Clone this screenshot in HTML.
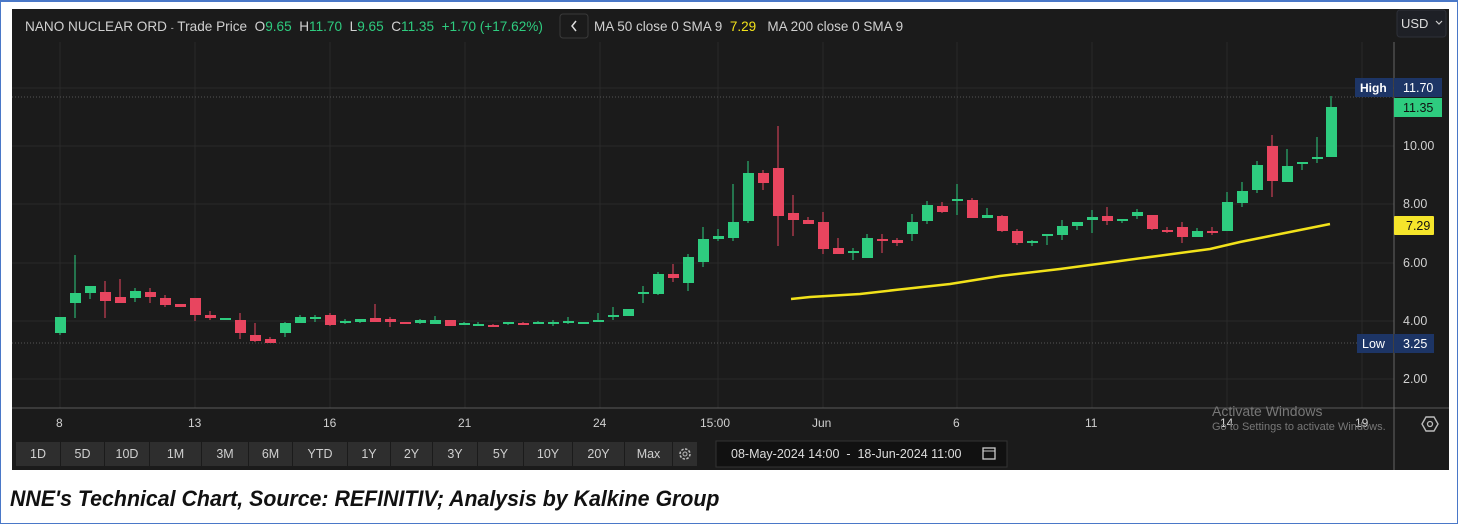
<!DOCTYPE html>
<html><head><meta charset="utf-8"><style>
*{margin:0;padding:0;box-sizing:border-box}
body{width:1458px;height:524px;background:#fff;position:relative;overflow:hidden;font-family:"Liberation Sans",sans-serif}
.frame{position:absolute;left:0;top:0;width:1458px;height:524px;border:1px solid #4a78c8;border-top:2px solid #4a78c8}
.chart{position:absolute;left:12px;top:9px;width:1437px;height:461px;background:#1b1b1b}
.t{position:absolute;font-size:13px;color:#d0d0d0;white-space:nowrap}
.g{color:#2ecc7f}
.btn{position:absolute;top:442px;height:24px;background:#2e2e2e;color:#cfcfcf;font-size:12.5px;text-align:center;line-height:24px}
.cap{position:absolute;left:10px;top:486px;font-size:22px;font-weight:bold;font-style:italic;color:#111;white-space:nowrap;transform:scaleX(0.97);transform-origin:left}
</style></head><body>
<div class="frame"></div>
<div class="chart"></div>
<svg style="position:absolute;left:0;top:0" width="1458" height="524">
<g stroke="#2a2a2a" stroke-width="1">
<line x1="12" y1="88" x2="1394" y2="88"/><line x1="12" y1="146" x2="1394" y2="146"/><line x1="12" y1="204" x2="1394" y2="204"/><line x1="12" y1="263" x2="1394" y2="263"/><line x1="12" y1="321" x2="1394" y2="321"/><line x1="12" y1="379" x2="1394" y2="379"/>
<line x1="60" y1="42" x2="60" y2="408"/><line x1="195" y1="42" x2="195" y2="408"/><line x1="330" y1="42" x2="330" y2="408"/><line x1="465" y1="42" x2="465" y2="408"/><line x1="600" y1="42" x2="600" y2="408"/><line x1="718" y1="42" x2="718" y2="408"/><line x1="823" y1="42" x2="823" y2="408"/><line x1="957" y1="42" x2="957" y2="408"/><line x1="1092" y1="42" x2="1092" y2="408"/><line x1="1227" y1="42" x2="1227" y2="408"/><line x1="1362" y1="42" x2="1362" y2="408"/>
</g>
<line x1="12" y1="97" x2="1394" y2="97" stroke="#555" stroke-dasharray="1,2"/>
<line x1="12" y1="343" x2="1394" y2="343" stroke="#555" stroke-dasharray="1,2"/>
<line x1="12" y1="408" x2="1449" y2="408" stroke="#5a5a5a"/>
<line x1="1394" y1="42" x2="1394" y2="470" stroke="#666"/>
<g stroke="#2ecc7f" stroke-width="1">
<path d="M60 317V335M75 255V318M90 286V299M135 288V302M225 318V320M285 322V337M300 315V323M315 315V322M345 319V324M360 319V323M420 319V324M435 316V324M464 322V325M478 322V326M508 322V325M538 321V324M553 320V326M568 317V324M583 322V324M598 313V322M613 307V320M628 309V316M643 286V303M658 272V295M688 254V291M703 227V267M718 229V241M733 184V241M748 161V223M853 248V260M867 234V258M912 214V241M927 201V224M957 184V215M987 208V218M1032 240V246M1047 234V245M1062 220V240M1077 222V230M1092 210V233M1122 219V223M1137 209V219M1197 228V237M1227 192V231M1242 182V207M1257 161V193M1287 149V182M1302 162V170M1317 137V163M1331 96V157"/>
</g>
<g stroke="#e8455f" stroke-width="1">
<path d="M105 281V318M120 279V303M150 288V303M165 295V307M195 298V321M210 311V320M240 313V339M255 323V342M270 337V343M330 313V326M375 304V322M390 317V327M450 320V326M493 324V327M523 322V325M673 264V282M763 170V190M778 126V246M793 195V236M808 217V224M823 212V254M838 238V254M882 234V253M897 238V246M942 202V213M972 198V218M1002 215V232M1017 229V245M1107 207V225M1152 215V230M1167 227V233M1182 222V243M1212 227V235M1272 135V197"/>
</g>
<g fill="#2ecc7f">
<rect x="55" y="317" width="11" height="16"/><rect x="70" y="293" width="11" height="10"/><rect x="85" y="286" width="11" height="7"/><rect x="130" y="291" width="11" height="7"/><rect x="220" y="318" width="11" height="2"/><rect x="280" y="323" width="11" height="10"/><rect x="295" y="317" width="11" height="6"/><rect x="310" y="317" width="11" height="2"/><rect x="340" y="321" width="11" height="2"/><rect x="355" y="319" width="11" height="3"/><rect x="415" y="320" width="11" height="3"/><rect x="430" y="320" width="11" height="4"/><rect x="459" y="323" width="11" height="2"/><rect x="473" y="324" width="11" height="2"/><rect x="503" y="322" width="11" height="2"/><rect x="533" y="322" width="11" height="2"/><rect x="548" y="322" width="11" height="2"/><rect x="563" y="321" width="11" height="2"/><rect x="578" y="322" width="11" height="2"/><rect x="593" y="320" width="11" height="2"/><rect x="608" y="315" width="11" height="2"/><rect x="623" y="309" width="11" height="7"/><rect x="638" y="292" width="11" height="2"/><rect x="653" y="274" width="11" height="20"/><rect x="683" y="257" width="11" height="26"/><rect x="698" y="239" width="11" height="23"/><rect x="713" y="236" width="11" height="3"/><rect x="728" y="222" width="11" height="16"/><rect x="743" y="173" width="11" height="48"/><rect x="848" y="251" width="11" height="2"/><rect x="862" y="238" width="11" height="20"/><rect x="907" y="222" width="11" height="12"/><rect x="922" y="205" width="11" height="16"/><rect x="952" y="199" width="11" height="2"/><rect x="982" y="215" width="11" height="3"/><rect x="1027" y="241" width="11" height="2"/><rect x="1042" y="234" width="11" height="2"/><rect x="1057" y="226" width="11" height="9"/><rect x="1072" y="222" width="11" height="4"/><rect x="1087" y="217" width="11" height="3"/><rect x="1117" y="219" width="11" height="2"/><rect x="1132" y="212" width="11" height="4"/><rect x="1192" y="231" width="11" height="6"/><rect x="1222" y="202" width="11" height="29"/><rect x="1237" y="191" width="11" height="12"/><rect x="1252" y="165" width="11" height="25"/><rect x="1282" y="166" width="11" height="16"/><rect x="1297" y="162" width="11" height="2"/><rect x="1312" y="157" width="11" height="2"/><rect x="1326" y="107" width="11" height="50"/>
</g>
<g fill="#e8455f">
<rect x="100" y="292" width="11" height="9"/><rect x="115" y="297" width="11" height="6"/><rect x="145" y="292" width="11" height="5"/><rect x="160" y="298" width="11" height="7"/><rect x="175" y="304" width="11" height="3"/><rect x="190" y="298" width="11" height="17"/><rect x="205" y="315" width="11" height="3"/><rect x="235" y="320" width="11" height="13"/><rect x="250" y="335" width="11" height="6"/><rect x="265" y="339" width="11" height="4"/><rect x="325" y="315" width="11" height="10"/><rect x="370" y="318" width="11" height="4"/><rect x="385" y="319" width="11" height="3"/><rect x="400" y="322" width="11" height="2"/><rect x="445" y="320" width="11" height="6"/><rect x="488" y="325" width="11" height="2"/><rect x="518" y="323" width="11" height="2"/><rect x="668" y="274" width="11" height="4"/><rect x="758" y="173" width="11" height="10"/><rect x="773" y="168" width="11" height="48"/><rect x="788" y="213" width="11" height="7"/><rect x="803" y="220" width="11" height="4"/><rect x="818" y="222" width="11" height="27"/><rect x="833" y="248" width="11" height="6"/><rect x="877" y="239" width="11" height="2"/><rect x="892" y="240" width="11" height="3"/><rect x="937" y="206" width="11" height="6"/><rect x="967" y="200" width="11" height="18"/><rect x="997" y="216" width="11" height="15"/><rect x="1012" y="231" width="11" height="12"/><rect x="1102" y="216" width="11" height="5"/><rect x="1147" y="215" width="11" height="14"/><rect x="1162" y="230" width="11" height="2"/><rect x="1177" y="227" width="11" height="10"/><rect x="1207" y="231" width="11" height="2"/><rect x="1267" y="146" width="11" height="35"/>
</g>
<path d="M791 299L810 297L860 294L895 290L950 284L1000 276L1060 269L1120 261L1165 255L1210 249L1240 242L1280 234L1310 228L1330 224" fill="none" stroke="#f2e21a" stroke-width="2.5"/>
<rect x="560" y="14" width="28" height="24" rx="3" fill="#1b1b1b" stroke="#3a3a3a"/>
<path d="M576 21L572 26L576 31" fill="none" stroke="#ddd" stroke-width="1.5"/>
<rect x="1397" y="10" width="49" height="27" rx="3" fill="#1e2026" stroke="#2e3038"/>
<path d="M1436 21l3 3l3-3" fill="none" stroke="#ccc" stroke-width="1.2"/>
<rect x="1355" y="78" width="38" height="19" fill="#1d3566"/>
<rect x="1394" y="78" width="48" height="19" fill="#1d3566"/>
<rect x="1394" y="98" width="48" height="19" fill="#2ecc7f"/>
<rect x="1394" y="216" width="40" height="19" rx="1" fill="#f5e52b"/>
<rect x="1357" y="334" width="36" height="19" fill="#1d3566"/>
<rect x="1394" y="334" width="40" height="19" fill="#1d3566"/>
<rect x="716" y="441" width="291" height="26" fill="#111" stroke="#333"/>
<rect x="983" y="448" width="12" height="11" fill="none" stroke="#ccc" stroke-width="1.3"/><line x1="983" y1="451" x2="995" y2="451" stroke="#ccc"/>
<rect x="673" y="442" width="24" height="24" fill="#2e2e2e"/>
<circle cx="685" cy="454" r="5" fill="none" stroke="#bbb" stroke-width="1.5" stroke-dasharray="2.5,1.4"/><circle cx="685" cy="454" r="2" fill="none" stroke="#bbb"/>
<path d="M1422 424l4-7h8l4 7l-4 7h-8z" fill="none" stroke="#bbb" stroke-width="1.4"/><circle cx="1430" cy="424" r="2.5" fill="none" stroke="#bbb" stroke-width="1.3"/>
</svg>
<div class="t" style="left:25px;top:19px;font-size:13.6px">NANO NUCLEAR ORD <span style="font-size:9px">-</span> Trade Price&nbsp; O<span class="g">9.65</span> &nbsp;H<span class="g">11.70</span> &nbsp;L<span class="g">9.65</span> &nbsp;C<span class="g">11.35</span> &nbsp;<span class="g">+1.70 (+17.62%)</span></div>
<div class="t" style="left:594px;top:19px;font-size:13.5px">MA 50 close 0 SMA 9 &nbsp;<span style="color:#f2e21a">7.29</span> &nbsp; MA 200 close 0 SMA 9</div>
<div class="t" style="left:1401px;top:16px;font-size:13px;color:#ddd">USD</div>
<div class="t" style="left:1360px;top:81px;font-size:12px;color:#fff;font-weight:bold">High</div>
<div class="t" style="left:1403px;top:81px;font-size:12.5px;color:#fff">11.70</div>
<div class="t" style="left:1403px;top:101px;font-size:12.5px;color:#111">11.35</div>
<div class="t" style="left:1406px;top:219px;font-size:12.5px;color:#111">7.29</div>
<div class="t" style="left:1362px;top:337px;font-size:12.5px;color:#fff">Low</div>
<div class="t" style="left:1403px;top:337px;font-size:12.5px;color:#fff">3.25</div>
<div class="t" style="left:1403px;top:139px;font-size:12.5px">10.00</div>
<div class="t" style="left:1403px;top:197px;font-size:12.5px">8.00</div>
<div class="t" style="left:1403px;top:256px;font-size:12.5px">6.00</div>
<div class="t" style="left:1403px;top:314px;font-size:12.5px">4.00</div>
<div class="t" style="left:1403px;top:372px;font-size:12.5px">2.00</div>
<div class="t" style="left:56px;top:416px;font-size:12px">8</div>
<div class="t" style="left:188px;top:416px;font-size:12px">13</div>
<div class="t" style="left:323px;top:416px;font-size:12px">16</div>
<div class="t" style="left:458px;top:416px;font-size:12px">21</div>
<div class="t" style="left:593px;top:416px;font-size:12px">24</div>
<div class="t" style="left:700px;top:416px;font-size:12px">15:00</div>
<div class="t" style="left:812px;top:416px;font-size:12px">Jun</div>
<div class="t" style="left:953px;top:416px;font-size:12px">6</div>
<div class="t" style="left:1085px;top:416px;font-size:12px">11</div>
<div class="t" style="left:1220px;top:416px;font-size:12px">14</div>
<div class="t" style="left:1355px;top:416px;font-size:12px">19</div>
<div class="t" style="left:1212px;top:403px;font-size:14px;color:#777">Activate Windows</div>
<div class="t" style="left:1212px;top:421px;font-size:11px;color:#777">Go to Settings to activate Windows.</div>
<div class="btn" style="left:16px;width:44px">1D</div>
<div class="btn" style="left:61px;width:43px">5D</div>
<div class="btn" style="left:105px;width:44px">10D</div>
<div class="btn" style="left:150px;width:51px">1M</div>
<div class="btn" style="left:202px;width:46px">3M</div>
<div class="btn" style="left:249px;width:43px">6M</div>
<div class="btn" style="left:293px;width:54px">YTD</div>
<div class="btn" style="left:348px;width:42px">1Y</div>
<div class="btn" style="left:391px;width:41px">2Y</div>
<div class="btn" style="left:433px;width:44px">3Y</div>
<div class="btn" style="left:478px;width:45px">5Y</div>
<div class="btn" style="left:524px;width:48px">10Y</div>
<div class="btn" style="left:573px;width:51px">20Y</div>
<div class="btn" style="left:625px;width:47px">Max</div>
<div class="t" style="left:731px;top:447px;font-size:12.5px;color:#ddd">08-May-2024 14:00 &nbsp;- &nbsp;18-Jun-2024 11:00</div>
<div class="cap">NNE's Technical Chart, Source: REFINITIV; Analysis by Kalkine Group</div>
</body></html>
